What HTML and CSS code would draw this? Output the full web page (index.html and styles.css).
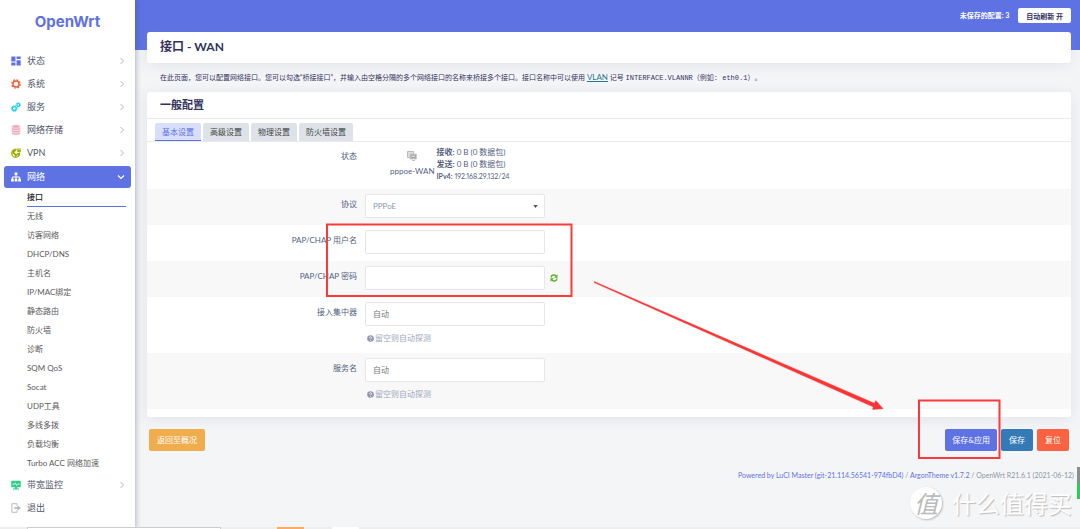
FILE: index.html
```html
<!DOCTYPE html>
<html lang="zh-CN">
<head>
<meta charset="utf-8">
<title>OpenWrt - 接口 - WAN</title>
<link rel="stylesheet" href="styles.css">
</head>
<body>
<div class="app">
  <aside class="sidebar">
    <a class="brand" href="#">OpenWrt</a>
    <nav>
      <ul class="menu">
        <li><a class="item" href="#"><svg class="ico" viewBox="0 0 10 10" fill="#5e72e4"><path d="M.3.500h4.200v5H.3zM5.500.5h4.200v2.600H5.500zM.3 6.500h4.200v3H.3zM5.500 4.200h4.200v5.300H5.500z"/></svg><span>状态</span><svg class="chev" viewBox="0 0 6 8"><path d="M1.500 1l3 3-3 3"/></svg></a></li>
        <li><a class="item" href="#"><svg class="ico" viewBox="0 0 10 10"><circle cx="5" cy="5" r="3.100" fill="none" stroke="#fb5c35" stroke-width="1.500"/><circle cx="5" cy="5" r="4.200" fill="none" stroke="#fb5c35" stroke-width="1.200" stroke-dasharray="1.800 1.500"/></svg><span>系统</span><svg class="chev" viewBox="0 0 6 8"><path d="M1.500 1l3 3-3 3"/></svg></a></li>
        <li><a class="item" href="#"><svg class="ico" viewBox="0 0 10 10" fill="none" stroke="#11cdef"><circle cx="3.300" cy="6.600" r="1.900" stroke-width="1.300"/><circle cx="3.300" cy="6.600" r="2.800" stroke-dasharray="1.200 1"/><circle cx="7.300" cy="2.900" r="1.400" stroke-width="1.200"/><circle cx="7.300" cy="2.900" r="2.200" stroke-width=".8" stroke-dasharray="1 .73"/></svg><span>服务</span><svg class="chev" viewBox="0 0 6 8"><path d="M1.500 1l3 3-3 3"/></svg></a></li>
        <li><a class="item" href="#"><svg class="ico" viewBox="0 0 10 10" fill="#f3a4b5"><path d="M.8 1.600C.8-.1 9.200-.1 9.200 1.600v6.800c0 1.700-8.400 1.700-8.400 0z"/><path d="M.8 2.300c1 1.200 7.400 1.200 8.400 0M.8 4.700c1 1.200 7.400 1.200 8.400 0M.8 7c1 1.200 7.400 1.200 8.400 0" fill="none" stroke="#fff" stroke-width=".7"/></svg><span>网络存储</span><svg class="chev" viewBox="0 0 6 8"><path d="M1.500 1l3 3-3 3"/></svg></a></li>
        <li><a class="item" href="#"><svg class="ico" viewBox="0 0 10 10"><circle cx="4.700" cy="5.300" r="4" fill="#fff" stroke="#a0ae00" stroke-width="1.200"/><path d="M1 3.500l2.500-2 1.700.8-1 1.500-1 .7 1.500 1 1.800.5-.5 1.800-1.500 1.500-1-2.300-2.200-1.500zM6 5h3v2L7 8.500z" fill="#a0ae00"/><path d="M6 .2h4v4.200H6z" fill="#a0ae00" stroke="#fff" stroke-width=".5"/><path d="M7.200 2V1.500a.8.8 0 0 1 1.600 0V2" fill="none" stroke="#fff" stroke-width=".5"/></svg><span>VPN</span><svg class="chev" viewBox="0 0 6 8"><path d="M1.500 1l3 3-3 3"/></svg></a></li>
        <li class="open"><a class="item active" href="#"><svg class="ico" viewBox="0 0 10 10" fill="#fff"><path d="M3.600.5h2.800v2.600H3.600zM0 6.700h2.800v2.800H0zM3.600 6.700h2.800v2.800H3.600zM7.200 6.700H10v2.800H7.200z"/><path d="M5 3v4M1.400 7V5h7.200v2" fill="none" stroke="#fff"/></svg><span>网络</span><svg class="chev down" viewBox="0 0 8 6"><path d="M1 1.500l3 3 3-3"/></svg></a>
          <ul class="submenu">
            <li><a class="current" href="#">接口</a></li>
            <li><a href="#">无线</a></li>
            <li><a href="#">访客网络</a></li>
            <li><a href="#">DHCP/DNS</a></li>
            <li><a href="#">主机名</a></li>
            <li><a href="#">IP/MAC绑定</a></li>
            <li><a href="#">静态路由</a></li>
            <li><a href="#">防火墙</a></li>
            <li><a href="#">诊断</a></li>
            <li><a href="#">SQM QoS</a></li>
            <li><a href="#">Socat</a></li>
            <li><a href="#">UDP工具</a></li>
            <li><a href="#">多线多拨</a></li>
            <li><a href="#">负载均衡</a></li>
            <li><a href="#">Turbo ACC 网络加速</a></li>
          </ul>
        </li>
        <li><a class="item" href="#"><svg class="ico" viewBox="0 0 10 10"><path d="M.3.800h9.400v6.400H.3zM4 7h2v1.500h2v1H2v-1h2z" fill="#2dce89"/><path d="M1.500 4.300h1.800l1-1.500 1.300 2.600 1-1.300h1.900" fill="none" stroke="#fff" stroke-width=".8"/></svg><span>带宽监控</span><svg class="chev" viewBox="0 0 6 8"><path d="M1.500 1l3 3-3 3"/></svg></a></li>
        <li><a class="item" href="#"><svg class="ico" viewBox="0 0 10 10"><path d="M6 2.800V.7H.9v8.600H6V7.200" fill="none" stroke="#adb5bd" stroke-width=".9"/><path d="M3.200 4.200h3.300V2.400L9.800 5 6.500 7.600V5.800H3.200z" fill="#adb5bd"/></svg><span>退出</span></a></li>
      </ul>
    </nav>
  </aside>

  <div class="main">
    <header class="topbar">
      <a class="unsaved" href="#">未保存的配置: 3</a>
      <button class="refresh" type="button">自动刷新 开</button>
    </header>
    <main class="content">
      <h1 class="card title">接口 - WAN</h1>
      <p class="intro">在此页面，您可以配置网络接口。您可以勾选“桥接接口”，并输入由空格分隔的多个网络接口的名称来桥接多个接口。接口名称中可以使用 <a href="#">VLAN</a> 记号 <code>INTERFACE.VLANNR（例如: eth0.1）。</code></p>
      <form class="form">
        <section class="card panel">
          <h2>一般配置</h2>
          <div class="tabs" role="tablist">
            <button class="tab on" type="button" role="tab" aria-selected="true">基本设置</button>
            <button class="tab" type="button" role="tab">高级设置</button>
            <button class="tab" type="button" role="tab">物理设置</button>
            <button class="tab" type="button" role="tab">防火墙设置</button>
          </div>
          <div class="row state">
            <span class="label">状态</span>
            <div class="status">
              <div class="iface">
                <svg class="net" viewBox="0 0 10 10"><path d="M.5.500h6v6h-6z" fill="#ddd" stroke="#bbb"/><path d="M3 3h6.500v5H3z" fill="#aaa" stroke="#ccc"/><path d="M4.300 4.300h4v2h-4zM5 9.500h3" fill="#e8e8e8" stroke="#999" stroke-width=".6"/></svg>
                <span>pppoe-WAN</span>
              </div>
              <div class="stats">
                <div><b>接收:</b> 0 B (0 数据包)</div>
                <div><b>发送:</b> 0 B (0 数据包)</div>
                <div class="addr"><b>IPv4:</b> 192.168.29.132/24</div>
              </div>
            </div>
          </div>
          <div class="row">
            <label class="label" for="proto">协议</label>
            <div><select class="field" id="proto"><option>PPPoE</option></select></div>
          </div>
          <div class="row">
            <label class="label" for="user">PAP/CHAP 用户名</label>
            <div><input class="field" id="user" type="text"></div>
          </div>
          <div class="row">
            <label class="label" for="pass">PAP/CHAP 密码</label>
            <div class="with-icon"><input class="field" id="pass" type="password">
              <button class="reveal" type="button" aria-label="显示密码"><svg viewBox="0 0 8 8"><path d="M1 3.500C1.300.8 4.500.3 6 2M7 4.500C6.700 7.200 3.500 7.700 2 6" fill="none" stroke="#5fae2e" stroke-width="1.500"/><path d="M7.500.3v3.500H4zM.5 7.700V4.200H4z" fill="#5fae2e"/></svg></button></div>
          </div>
          <div class="row">
            <label class="label" for="ac">接入集中器</label>
            <div><input class="field" id="ac" type="text" placeholder="自动">
              <div class="hint"><svg viewBox="0 0 8 8"><circle cx="4" cy="4" r="3.800" fill="#8d97b3"/><path d="M2.800 3.100c0-1.600 2.500-1.500 2.500 0 0 .8-1.200.8-1.200 1.700M4.100 5.400v1" fill="none" stroke="#fff" stroke-width=".9"/></svg>留空则自动探测</div></div>
          </div>
          <div class="row">
            <label class="label" for="service">服务名</label>
            <div><input class="field" id="service" type="text" placeholder="自动">
              <div class="hint"><svg viewBox="0 0 8 8"><circle cx="4" cy="4" r="3.800" fill="#8d97b3"/><path d="M2.800 3.100c0-1.600 2.500-1.500 2.500 0 0 .8-1.200.8-1.200 1.700M4.100 5.400v1" fill="none" stroke="#fff" stroke-width=".9"/></svg>留空则自动探测</div></div>
          </div>
        </section>
        <div class="actions">
          <button class="btn back" type="button">返回至概况</button>
          <button class="btn apply" type="submit">保存&amp;应用</button>
          <button class="btn save" type="button">保存</button>
          <button class="btn reset" type="reset">复位</button>
        </div>
      </form>
      <footer class="footer"><a href="#">Powered by LuCI Master (git-21.114.56541-974fbD4)</a> / <a href="#">ArgonTheme v1.7.2</a> / OpenWrt R21.6.1 (2021-06-12)</footer>
    </main>
  </div>

  <svg class="marks" viewBox="0 0 1080 529" width="1080" height="529" aria-hidden="true">
    <g fill="none" stroke="#fb3b3b" stroke-width="2"><path d="M327 224.500h244.500V296H327zM919 400.500h80.500V458H919z"/></g>
    <path d="M594.300 281.600L874.500 403.300l1.300-2.800 7.400 8.300-10.800.7 1-2.500L594 282.500z" fill="#fb3535" stroke="#fb3535" stroke-width=".4"/>
  </svg>
  <div class="watermark"><span class="seal">值</span><span>什么值得买</span></div>
  <div class="meter"></div>
  <div class="strip"><i class="bar"></i><i class="chip"></i><i class="chip pale"></i></div>
</div>
</body>
</html>
```
FILE: styles.css
```css
* { box-sizing: border-box; }
body {
  margin: 0;
  background: #f4f5f7;
  color: #32325d;
  font: 8px/12px Lato, "Noto Sans CJK SC", sans-serif;
}
a { color: inherit; text-decoration: none; }
ul { margin: 0; padding: 0; list-style: none; }
button, input, select { font: inherit; }
button { border: 0; cursor: pointer; }

.app { position: relative; display: flex; min-height: 100vh; overflow: hidden; }

.sidebar {
  position: relative;
  z-index: 1;
  flex: 0 0 135px;
  background: #fff;
  box-shadow: 0 0 6px rgba(60, 70, 100, .5);
}
.brand {
  display: block;
  height: 49px;
  padding-top: 12px;
  color: #5e72e4;
  font: 700 15px/20px Inter, sans-serif;
  text-align: center;
}
.menu { padding: 0 4px; }
.item {
  display: flex;
  align-items: center;
  height: 23px;
  padding: 0 6px 0 7px;
  border-radius: 3px;
  color: #4f5667;
  font-size: 9px;
}
.item span { flex: 1; }
.ico { width: 10px; height: 10px; margin-right: 6px; }
.chev { width: 6px; height: 8px; fill: none; stroke: #b4bcc8; stroke-width: 1; }
.chev.down { width: 8px; height: 6px; stroke: #fff; stroke-width: 1.2; }
.open { padding-top: 2px; }
.active { height: 22px; background: #5e72e4; color: #fff; }
.submenu { padding: 0 5px 0 23px; }
.submenu a { display: block; height: 19px; color: #5a5a5a; line-height: 18px; }
.submenu .current { border-bottom: 1px solid #5e72e4; color: #222; font-weight: 500; }

.main { flex: 1; min-width: 0; }
.topbar {
  display: flex;
  justify-content: flex-end;
  align-items: flex-start;
  gap: 9px;
  height: 50px;
  padding: 8px 9px 0;
  background: #5e72e4;
}
.unsaved { color: #fff; font-size: 7px; line-height: 14px; font-weight: 700; }
.refresh {
  height: 15px;
  padding: 0 8px;
  border-radius: 2px;
  background: #fff;
  color: #32325d;
  font-weight: 700;
  line-height: 14px;
  font-size: 7px;
}
.content { margin-top: -18px; padding: 0 9px 0 12px; }
.card { border-radius: 3px; background: #fff; box-shadow: 0 2px 14px rgba(136, 152, 170, .18); }
.title {
  margin: 0;
  padding: 5px 13px 6px;
  font-size: 12px;
  line-height: 20px;
  font-weight: 700;
}
.intro { margin: 0; padding: 8px 13px; color: #32325d; font-size: 7px; text-spacing-trim: space-all; }
.intro a { color: #27768a; text-decoration: underline; font-size: 8px; }
.intro code { font: 7px/12px "Liberation Mono", "Noto Sans CJK SC", monospace; }

.panel { padding-bottom: 8px; }
.panel h2 {
  margin: 0;
  padding: 3px 13px;
  border-bottom: 1px solid #e9ecef;
  font-size: 11px;
  line-height: 20px;
  font-weight: 700;
}
.tabs { display: flex; gap: 2px; padding: 4px 8px 0; border-bottom: 1px solid #e9ecef; }
.tab {
  height: 18px;
  padding: 0 7px;
  border-radius: 2px 2px 0 0;
  border-bottom: 1px solid transparent;
  background: #dde3e8;
  color: #444;
  line-height: 16px;
}
.tab.on { border-bottom-color: #5e72e4; background-color: #d8defc; color: #5e72e4; }

.row { display: grid; grid-template-columns: 210px 1fr; column-gap: 8px; padding: 5px 0 7px; }
.row:nth-child(even) { background: #f8f8f8; }
.row.state { padding: 4px 0 7px; }
.row > div { min-width: 0; }
.label { padding-top: 4px; color: #525f7f; text-align: right; }
.status { display: flex; gap: 2px; padding-left: 25px; color: #525f7f; }
.iface { display: flex; flex-direction: column; align-items: center; gap: 4px; padding-top: 5px; }
.net { width: 10px; height: 10px; }
.addr { font-size: 7px; font-variant-numeric: proportional-nums; }
.field {
  display: block;
  width: 180px;
  height: 24px;
  padding: 0 7px;
  border: 1px solid #e3e6ea;
  border-radius: 2px;
  background: #fff;
  color: #8898aa;
}
select.field {
  appearance: none;
  background: url("data:image/svg+xml,%3Csvg xmlns='http://www.w3.org/2000/svg' viewBox='0 0 6 4'%3E%3Cpath d='M0 0h6L3 4z' fill='%23555'/%3E%3C/svg%3E") right 6px center / 5px 3px no-repeat #fff;
}
.field::placeholder { color: #777; }
.with-icon { display: flex; align-items: center; gap: 5px; }
.reveal { width: 8px; height: 8px; padding: 0; background: none; }
.reveal svg { display: block; }
.hint { display: flex; align-items: center; gap: 1px; margin: 6px 0 2px 2px; color: #a0a8bd; }
.hint svg { width: 7px; height: 7px; }

.actions { display: flex; gap: 4px; padding: 12px 2px 0; }
.btn { height: 22px; padding: 0 8px; border-radius: 2px; color: #fff; }
.back { margin-right: auto; background: #f0ad4e; }
.apply { padding: 0 7px; background: #5e72e4; }
.save { background: #337ab7; }
.reset { background: #fb6340; }
.footer { padding: 18px 0 0; margin-right: -3px; color: #8e96a3; font-size: 7px; text-align: right; }
.footer a { color: #5e72e4; }

.marks { position: absolute; z-index: 2; left: 0; top: 0; pointer-events: none; }
.watermark {
  position: absolute;
  z-index: 2;
  right: 8px;
  bottom: 10px;
  display: flex;
  align-items: center;
  gap: 10px;
  color: #fff;
  font: 24px/32px "Noto Sans CJK SC", sans-serif;
  text-shadow: 1px 1px 1px #bbb;
}
.seal {
  width: 32px;
  height: 32px;
  border-radius: 50%;
  background: #fff;
  box-shadow: 1px 1px 2px #bbb;
  color: #bbb;
  font-style: italic;
  text-align: center;
  text-shadow: none;
}
.meter {
  position: absolute;
  z-index: 2;
  right: 0;
  top: 467px;
  width: 3px;
  height: 32px;
  background: linear-gradient(#8c8c8c 50%, #2fcb5a 50%);
}
.strip { position: absolute; z-index: 2; left: 0; right: 0; bottom: 0; height: 2px; background: #eee; display: flex; }
.bar { width: 194px; margin-left: 27px; border: 1px solid #ccc; border-bottom: 0; background: #fff; }
.chip { width: 27px; margin-left: 56px; background: #fbab62; }
.chip.pale { margin-left: 28px; background: #fff; }
```
